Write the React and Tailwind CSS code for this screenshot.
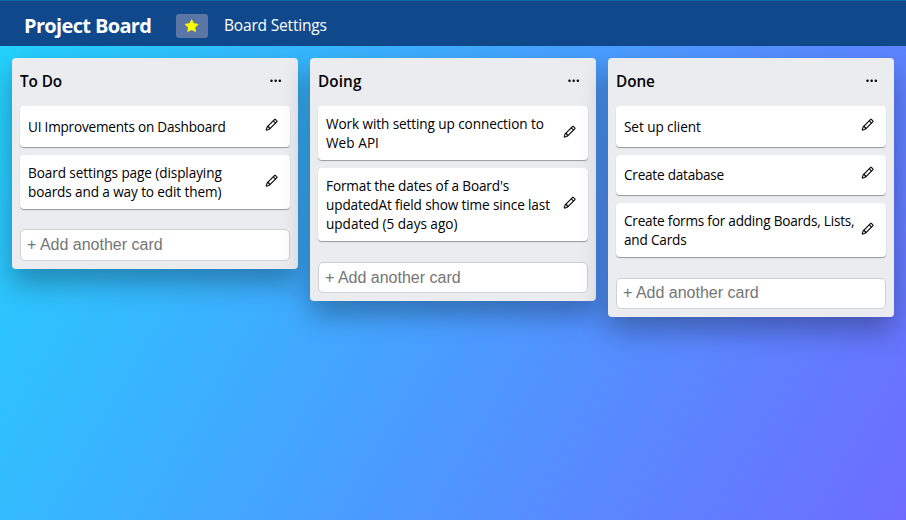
import { BsThreeDots, BsStarFill } from "react-icons/bs";

const lists = [
  {
    title: "To Do",
    titleClass: "tracking-[-0.1px]",
    inputClass: "mt-5 h-8",
    cards: [
      { lines: [["UI Improvements on Dashboard", "tracking-[-0.22px]"]], box: "h-[41px]" },
      {
        lines: [
          ["Board settings page (displaying", "tracking-[-0.1px]"],
          ["boards and a way to edit them)", "tracking-[-0.12px]"],
        ],
        box: "h-[54px]",
      },
    ],
  },
  {
    title: "Doing",
    titleClass: "tracking-[0.1px]",
    inputClass: "mt-[21px] h-[31px]",
    cards: [
      {
        lines: [
          ["Work with setting up connection to", "tracking-[-0.1px]"],
          ["Web API", "tracking-[0.05px]"],
        ],
        box: "h-[54px]",
      },
      {
        lines: [
          ["Format the dates of a Board's", "tracking-[-0.14px]"],
          ["updatedAt field show time since last", "tracking-[-0.13px]"],
          ["updated (5 days ago)", "tracking-[-0.03px]"],
        ],
        box: "h-[73px]",
      },
    ],
  },
  {
    title: "Done",
    titleClass: "tracking-[-0.05px]",
    inputClass: "mt-[21px] h-[31px] pb-[2px]",
    cards: [
      { lines: [["Set up client", "tracking-[-0.08px]"]], box: "h-[41px]" },
      { lines: [["Create database", "tracking-[-0.24px]"]], box: "h-[40px] pb-px" },
      {
        lines: [
          ["Create forms for adding Boards, Lists,", "tracking-[-0.22px]"],
          ["and Cards", "tracking-[-0.2px]"],
        ],
        box: "h-[54px]",
      },
    ],
  },
];

function Pencil() {
  return (
    <svg viewBox="0 0 16 16" fill="currentColor" stroke="currentColor" strokeWidth="0.3" className="size-[13.33px]">
      <path fillRule="evenodd" d="M11.293 1.293a1 1 0 0 1 1.414 0l2 2a1 1 0 0 1 0 1.414l-9 9a1 1 0 0 1-.39.242l-3 1a1 1 0 0 1-1.266-1.265l1-3a1 1 0 0 1 .242-.391l9-9zM12 2l2 2-9 9-3 1 1-3 9-9z" />
      <path fillRule="evenodd" d="M12.146 6.354l-2.5-2.5.708-.708 2.5 2.5-.707.708zM3 10v.5a.5.5 0 0 0 .5.5H4v.5a.5.5 0 0 0 .5.5H5v.5a.5.5 0 0 0 .5.5H6v-1.5a.5.5 0 0 0-.5-.5H5v-.5a.5.5 0 0 0-.5-.5H3z" />
    </svg>
  );
}

function Card({ card }) {
  return (
    <div className={`flex items-center justify-between rounded-[4px] bg-white pr-3 pl-2 shadow-[0_1px_1px_rgba(0,0,0,0.35)] ${card.box}`}>
      <div className="min-w-0 flex-1 text-[13.6px] leading-[19px] whitespace-nowrap">
        {card.lines.map(([text, tracking]) => (
          <div key={text} className={tracking}>{text}</div>
        ))}
      </div>
      <button className="mb-[3px] shrink-0">
        <Pencil />
      </button>
    </div>
  );
}

function List({ list }) {
  return (
    <section className="w-[286px] shrink-0 rounded-[4px] bg-[#ebecf0] px-2 pb-2 shadow-[0_14px_28px_rgba(0,0,0,0.3)]">
      <header className="flex h-12 items-center justify-between pr-2">
        <h2 className={`pb-px text-[15.3px] font-semibold ${list.titleClass}`}>{list.title}</h2>
        <button className="mb-[3px]">
          <BsThreeDots className="size-[13.33px]" />
        </button>
      </header>
      <div className="flex flex-col gap-2">
        {list.cards.map((card) => (
          <Card key={card.lines[0][0]} card={card} />
        ))}
      </div>
      <input
        placeholder="+ Add another card"
        className={`block w-full rounded-[5px] border border-[#d0d0d0] bg-white px-1.5 font-['Liberation_Sans',Arial,sans-serif] text-[16px] placeholder:text-[#757575] ${list.inputClass}`}
      />
    </section>
  );
}

export default function App() {
  return (
    <div className="h-[520px] w-[906px] overflow-hidden bg-[linear-gradient(120deg,#21d4fd_0%,#47a0ff_50%,#6e6cff_100%)] font-['Open_Sans','Noto_Sans',sans-serif] text-black">
      <nav className="flex h-[46px] items-center border-t border-[#026aa7] bg-[#0f498b] pt-1 pl-6 text-white">
        <h1 className="w-[152px] text-[20px] font-bold tracking-[-0.65px] whitespace-nowrap">Project Board</h1>
        <button className="flex h-6 w-8 items-center justify-center rounded-[3px] bg-[#5b76a5] text-[#ff0]">
          <BsStarFill className="size-[13.33px]" />
        </button>
        <a className="ml-4 text-[15.5px] tracking-[-0.18px] whitespace-nowrap">Board Settings</a>
      </nav>
      <main className="flex items-start gap-3 p-3">
        {lists.map((list) => (
          <List key={list.title} list={list} />
        ))}
      </main>
    </div>
  );
}
